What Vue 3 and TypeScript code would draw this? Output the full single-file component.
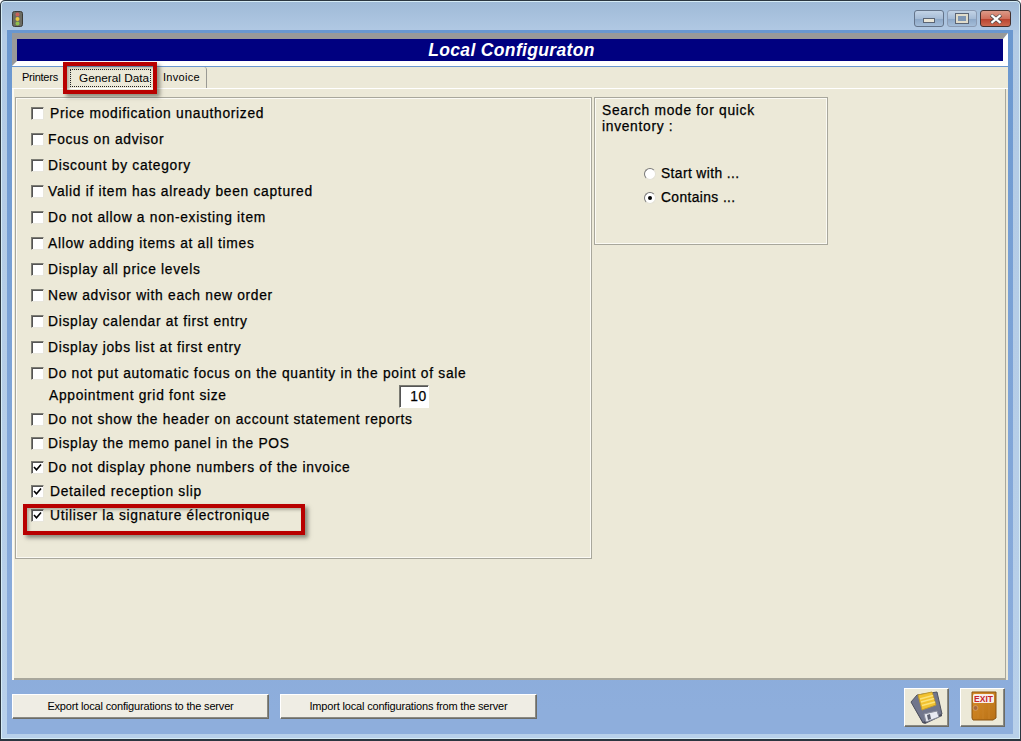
<script setup lang="ts">
interface Row { label: string; checked?: boolean; indent?: boolean; spinner?: boolean; height: number; afterSpin?: boolean }
const rows: Row[] = [
  { label: 'Price modification unauthorized', indent: true, height: 26 },
  { label: 'Focus on advisor', height: 26 },
  { label: 'Discount by category', height: 26 },
  { label: 'Valid if item has already been captured', height: 26 },
  { label: 'Do not allow a non-existing item', height: 26 },
  { label: 'Allow adding items at all times', height: 26 },
  { label: 'Display all price levels', height: 26 },
  { label: 'New advisor with each new order', height: 26 },
  { label: 'Display calendar at first entry', height: 26 },
  { label: 'Display jobs list at first entry', height: 26 },
  { label: 'Do not put automatic focus on the quantity in the point of sale', height: 26 },
  { label: 'Appointment grid font size', spinner: true, height: 18 },
  { label: 'Do not show the header on account statement reports', height: 24, afterSpin: true },
  { label: 'Display the memo panel in the POS', height: 24 },
  { label: 'Do not display phone numbers of the invoice', checked: true, height: 24 },
  { label: 'Detailed reception slip', checked: true, indent: true, height: 24 },
  { label: 'Utiliser la signature électronique', checked: true, indent: true, height: 24 },
]
</script>

<template>
  <div class="window">
    <header class="titlebar">
      <svg class="app-icon" width="11" height="16" viewBox="0 0 11 16">
        <rect x="0.5" y="0.5" width="10" height="15" rx="2" fill="#6b6b62" stroke="#3c3c38" />
        <circle cx="5.5" cy="3.5" r="2" fill="#c9605a" />
        <circle cx="5.5" cy="8" r="2" fill="#e8c83e" />
        <circle cx="5.5" cy="12.5" r="2" fill="#8ec04c" />
      </svg>
      <div class="controls">
        <div class="ctl ctl-min"><span class="glyph-min"></span></div>
        <div class="ctl ctl-max"><span class="glyph-max"></span></div>
        <div class="ctl ctl-close">
          <svg width="14" height="10" viewBox="0 0 14 10">
            <path d="M2 1 L12 9 M12 1 L2 9" stroke="#4a4a4a" stroke-width="3.6" />
            <path d="M2.4 1.2 L11.6 8.8 M11.6 1.2 L2.4 8.8" stroke="#fff" stroke-width="2.2" />
          </svg>
        </div>
      </div>
    </header>

    <div class="client">
      <div class="banner">Local Configuraton</div>

      <div class="tabs">
        <div class="tab tab-first">Printers</div>
        <div class="tab tab-active"><span class="focus">General Data</span></div>
        <div class="tab tab-last">Invoice</div>
      </div>

      <main class="page">
        <section class="panel panel-main">
          <div
            v-for="r in rows"
            :key="r.label"
            class="row"
            :class="{ 'row-indent': r.indent, 'row-spin': r.spinner, 'row-after': r.afterSpin }"
            :style="{ height: r.height + 'px' }"
          >
            <span v-if="!r.spinner" class="check">
              <svg v-if="r.checked" width="9" height="9" viewBox="0 0 9 9">
                <path d="M1 4 L3.5 6.8 L8 1.6" fill="none" stroke="#000" stroke-width="1.6" />
              </svg>
            </span>
            <span class="label">{{ r.label }}</span>
            <span v-if="r.spinner" class="spin">10</span>
          </div>
        </section>

        <section class="panel panel-side">
          <p class="side-title">Search mode for quick inventory :</p>
          <div class="radio-row"><span class="radio"></span><span class="label">Start with ...</span></div>
          <div class="radio-row"><span class="radio radio-on"></span><span class="label">Contains ...</span></div>
        </section>
      </main>

      <footer class="bottom">
        <button class="btn btn-text">Export local configurations to the server</button>
        <button class="btn btn-text">Import local configurations from the server</button>
        <span class="spacer"></span>
        <button class="btn btn-icon" aria-label="Save">
          <svg width="33" height="34" viewBox="0 0 33 34">
            <path d="M1 11 L7 4 L27 1 L32 23 L13 32 Z" fill="#71768c" stroke="#50535f" />
            <path d="M1 11 L13 32 L15 33 L32 25 L32 23 L13 31 Z" fill="#4a4d5c" />
            <path d="M8 4 L22 1 L26 14 L12 19 Z" fill="#f2c230" stroke="#c09a30" />
            <path d="M10 8 L23 4.5 M11 11 L24 7.5 M12 14.5 L25 11" stroke="#fbe27a" stroke-width="1.3" />
            <path d="M14 23 L27 20 L29 26 L16 31 Z" fill="#e8eaf2" stroke="#8a8e9c" />
            <path d="M17 24 L20 23 L21 28 L18 29 Z" fill="#5c6070" />
          </svg>
        </button>
        <button class="btn btn-icon" aria-label="Exit">
          <svg class="door" width="26" height="31" viewBox="0 0 26 31">
            <defs>
              <linearGradient id="doorFill" x1="0" y1="0" x2="1" y2="1">
                <stop offset="0" stop-color="#d98e28" />
                <stop offset="1" stop-color="#b87016" />
              </linearGradient>
            </defs>
            <path d="M1 1 H25 V27 L22 29 H2 L1 27 Z" fill="url(#doorFill)" stroke="#8a5412" />
            <path d="M7 12 V27 M12 12 V28 M18 12 V28" stroke="#c98226" stroke-width="1" />
            <rect x="2" y="3" width="21" height="9" rx="1.5" fill="#f6eeea" />
            <text x="12.5" y="10.8" text-anchor="middle" class="exit-text">EXIT</text>
            <circle cx="4.5" cy="17" r="2.4" fill="#a8683a" stroke="#e0b078" stroke-width="0.6" />
          </svg>
        </button>
      </footer>
    </div>

    <div class="mark mark-tab"></div>
    <div class="mark mark-sign"></div>
  </div>
</template>

<style scoped>
.window {
  position: relative;
  width: 1021px;
  height: 741px;
  box-sizing: border-box;
  display: flex;
  flex-direction: column;
  overflow: hidden;
  background: linear-gradient(180deg, #9fbad7 0, #b3cbe5 34px, #b8d0ea 100%);
  border: 1px solid #2b3640;
  border-bottom-width: 2px;
  border-radius: 5px 5px 0 0;
  box-shadow: inset 0 0 0 1px #d6ecf6;
  font-family: "Liberation Sans", Arial, sans-serif;
  color: #000;
}
.titlebar {
  height: 29px;
  flex: none;
  display: flex;
  align-items: center;
  justify-content: space-between;
  padding: 6px 9px 0 11px;
  box-sizing: border-box;
}
.controls { display: flex; gap: 3px; }
.ctl {
  height: 17px;
  width: 30px;
  box-sizing: border-box;
  border: 1px solid #64748a;
  border-radius: 3px;
  display: flex;
  align-items: center;
  justify-content: center;
  background: linear-gradient(180deg, #c2d3e6 0, #a6bcd6 50%, #8ba6c6 51%, #a4bdd8 100%);
}
.ctl-max { border-color: #8b9bb3; }
.ctl-close {
  width: 31px;
  border-color: #44302e;
  background: linear-gradient(180deg, #dc9a88 0, #d0705c 50%, #b8402c 51%, #cc6a50 100%);
}
.glyph-min { width: 10px; height: 3px; background: #e9e6d8; border: 1px solid #5a6474; margin-top: 4px; }
.glyph-max { width: 8px; height: 5px; background: #7f97b4; border: 2px solid #e0dccb; outline: 1px solid #5a6474; }
.client {
  flex: 1;
  margin: 0 7px 5px 6px;
  padding: 3px 5px 0 5px;
  background: linear-gradient(180deg, #6a97cf 0, #7ba2d6 300px, #8eaedc 680px);
  display: flex;
  flex-direction: column;
  min-height: 0;
}
.banner {
  height: 33px;
  flex: none;
  box-sizing: border-box;
  background: #000080;
  border-style: solid;
  border-width: 6px 5px 5px 5px;
  border-color: #999 #fff #fff #999;
  color: #fff;
  text-align: center;
  padding-left: 3px;
  font-style: italic;
  font-weight: 700;
  font-size: 17.5px;
  line-height: 23px;
  letter-spacing: 0.35px;
}
.tabs {
  display: flex;
  height: 21px;
  flex: none;
  box-sizing: content-box;
  background: #ece9d8;
  border-top: 1px solid #6a97cf;
}
.tab {
  font-size: 11px;
  line-height: 21px;
  height: 21px;
  white-space: nowrap;
}
.tab-first { padding: 0 0 0 10px; width: 48px; box-sizing: border-box; letter-spacing: -0.25px; }
.tab-active { padding: 1px 0 0 10px; width: 93px; box-sizing: border-box; font-size: 11.8px; }
.focus {
  display: inline-block;
  box-sizing: border-box;
  width: 81px;
  height: 18px;
  line-height: 16px;
  padding-left: 8px;
  border: 1px dotted #222;
}
.tab-last {
  box-sizing: border-box;
  width: 54px;
  padding-left: 10px;
  letter-spacing: 0.3px;
  border-right: 1px solid #9a9a94;
  border-top-right-radius: 3px;
}
.page {
  height: 592px;
  flex: none;
  box-sizing: border-box;
  background: #ece9d8;
  box-shadow: inset 0 1px 0 #fff, inset 2px 0 0 #fbfaf4, inset -2px 0 0 #ece9d8, inset -3px 0 0 #a8a79c, inset 0 -2px 0 #a8a79c;
  padding: 9px 0 0 3px;
  display: flex;
  align-items: flex-start;
  gap: 2px;
}
.panel {
  box-sizing: border-box;
  border: 1px solid #a8a79c;
  box-shadow: inset 0 0 0 1px #fbfaf4;
  background: #ece9d8;
}
.panel-main { width: 577px; height: 462px; padding-top: 2px; }
.panel-side { width: 234px; height: 148px; padding: 5px 7px; }
.row {
  display: flex;
  align-items: center;
  padding-left: 15px;
  box-sizing: border-box;
}
.row .label { padding-top: 2px; }
.row-indent .label { margin-left: 2px; }
.row-after { margin-top: 3px; }
.row-spin {
  padding-left: 33px;
  width: 413px;
  justify-content: space-between;
}
.check {
  width: 13px;
  height: 13px;
  box-sizing: border-box;
  flex: none;
  background: #fff;
  border: 1px solid;
  border-color: #7c7c74 #e8e6dc #e8e6dc #7c7c74;
  box-shadow: inset 1px 1px 0 #555;
  display: inline-flex;
  align-items: center;
  justify-content: center;
  margin-right: 4px;
}
.label,
.side-title,
.spin {
  font-family: "Liberation Sans", Arial, sans-serif;
  font-size: 13.8px;
  letter-spacing: 0.7px;
  -webkit-text-stroke: 0.25px #000;
}
.label {
  line-height: 16px;
  white-space: nowrap;
}
.spin {
  flex: none;
  width: 30px;
  height: 23px;
  margin-top: 2px;
  box-sizing: border-box;
  background: #fff;
  border: 1px solid;
  border-color: #7a7a72 #fff #fff #7a7a72;
  box-shadow: inset 1px 1px 0 #555;
  text-align: right;
  padding-right: 1px;
  line-height: 21px;
}
.side-title {
  margin: 0 0 27px 0;
  width: 210px;
  line-height: 16px;
}
.radio-row {
  display: flex;
  align-items: center;
  height: 24px;
  padding-left: 42px;
  gap: 5px;
}
.radio-row .label { letter-spacing: 0.4px; }
.radio {
  position: relative;
  width: 12px;
  height: 12px;
  box-sizing: border-box;
  border-radius: 50%;
  background: #fff;
  border: 1px solid #777;
  border-right-color: #e4e2d6;
  border-bottom-color: #e4e2d6;
  flex: none;
}
.radio-on::after {
  content: "";
  position: absolute;
  left: 3px;
  top: 3px;
  width: 4px;
  height: 4px;
  border-radius: 50%;
  background: #000;
}
.bottom {
  flex: 1;
  display: flex;
  align-items: flex-start;
  padding: 14px 3px 0 0;
  gap: 11px;
  min-height: 0;
}
.btn {
  box-sizing: border-box;
  background: #ece9d8;
  border: 1px solid;
  border-color: #fff #6c6c66 #6c6c66 #fff;
  box-shadow: inset -1px -1px 0 #8a8a84;
  padding: 0;
  font-family: "Liberation Sans", Arial, sans-serif;
  color: #000;
}
.btn-text {
  width: 257px;
  height: 25px;
  padding-bottom: 2px;
  font-size: 11px;
  letter-spacing: -0.17px;
  background: #efede4;
}
.spacer { flex: 1; }
.btn-icon {
  width: 45px;
  height: 39px;
  display: flex;
  align-items: center;
  justify-content: center;
  margin-top: -6px;
}
.door { margin-left: 3px; margin-top: -3px; }
.exit-text { font: 700 8.5px "Liberation Sans", Arial, sans-serif; fill: #c8242c; }
.mark {
  position: absolute;
  box-sizing: border-box;
  border: 4px solid #b80000;
  box-shadow: 3px 3px 4px rgba(60, 60, 50, 0.55), inset 2px 2px 3px rgba(60, 60, 50, 0.35);
  pointer-events: none;
}
.mark-tab { left: 62px; top: 61px; width: 94px; height: 32px; }
.mark-sign { left: 22px; top: 503px; width: 282px; height: 31px; }
</style>

<style>
html, body { margin: 0; background: #fff; }
</style>
